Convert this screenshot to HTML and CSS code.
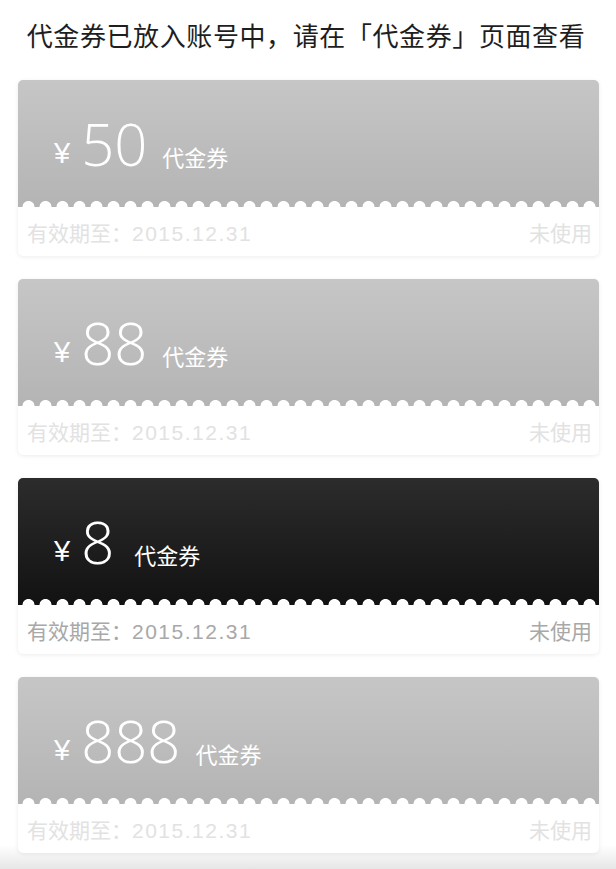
FILE: index.html
```html
<!DOCTYPE html>
<html lang="zh-CN">
<head>
<meta charset="utf-8">
<link rel="stylesheet" href="styles.css">
</head>
<body>
<div class="page">
  <h1 class="notice">代金券已放入账号中，请在「代金券」页面查看</h1>
  <div class="list">
    <div class="coupon">
      <div class="coupon-head">
        <span class="yen">¥</span><span class="amount">50</span><span class="label">代金券</span>
      </div>
      <div class="coupon-foot"><span>有效期至：<span class="date">2015.12.31</span></span><span>未使用</span></div>
    </div>
    <div class="coupon">
      <div class="coupon-head">
        <span class="yen">¥</span><span class="amount">88</span><span class="label">代金券</span>
      </div>
      <div class="coupon-foot"><span>有效期至：<span class="date">2015.12.31</span></span><span>未使用</span></div>
    </div>
    <div class="coupon active">
      <div class="coupon-head">
        <span class="yen">¥</span><span class="amount">8</span><span class="label">代金券</span>
      </div>
      <div class="coupon-foot"><span>有效期至：<span class="date">2015.12.31</span></span><span>未使用</span></div>
    </div>
    <div class="coupon">
      <div class="coupon-head">
        <span class="yen">¥</span><span class="amount">888</span><span class="label">代金券</span>
      </div>
      <div class="coupon-foot"><span>有效期至：<span class="date">2015.12.31</span></span><span>未使用</span></div>
    </div>
  </div>
</div>
</body>
</html>
```

FILE: styles.css
```css
html, body {
  margin: 0;
  padding: 0;
  background: #fff;
}
body {
  font-family: "Noto Sans CJK SC", "Noto Sans", sans-serif;
  width: 616px;
  height: 869px;
  overflow: hidden;
}
.page {
  height: 869px;
  background: linear-gradient(to bottom, #fff 0, #fff 845px, #e6e6e6 869px);
}
.notice {
  margin: 0;
  height: 80px;
  display: flex;
  align-items: center;
  justify-content: center;
  padding: 0 4px 12px 0;
  box-sizing: border-box;
  font-size: 26px;
  font-weight: 400;
  color: #1e1e1e;
  letter-spacing: 0.6px;
}
.list {
  display: flex;
  flex-direction: column;
  gap: 23px;
  padding: 0 17px 0 18px;
}
.coupon {
  height: 176px;
  border-radius: 5px;
  background: #fff;
  box-shadow: 0 1px 4px rgba(0, 0, 0, 0.08);
  display: flex;
  flex-direction: column;
  overflow: hidden;
}
.coupon-head {
  position: relative;
  height: 127px;
  background: linear-gradient(to bottom, #c6c6c6, #b4b4b4);
  padding: 32px 0 0 36px;
  box-sizing: border-box;
  color: #fff;
  white-space: nowrap;
  line-height: 64px;
}
.coupon-head::after {
  content: "";
  position: absolute;
  left: 2px;
  right: 0;
  bottom: 0;
  height: 6px;
  background: radial-gradient(circle at 50% 100%, #fff 5.6px, rgba(255,255,255,0) 6.4px) 0 0 / 17px 6px repeat-x;
}
.active .coupon-head {
  background: linear-gradient(to bottom, #2c2c2c, #121212);
}
.yen {
  font-family: "Liberation Sans", sans-serif;
  font-size: 29px;
  margin-right: 11px;
  vertical-align: 3px;
}
.amount {
  font-family: "Open Sans", Roboto, sans-serif;
  font-weight: 300;
  font-size: 58px;
}
.label {
  font-size: 22px;
  margin-left: 15px;
}
.active .label {
  margin-left: 20px;
}
.coupon-foot {
  flex: 1;
  display: flex;
  justify-content: space-between;
  align-items: center;
  padding: 0 7px 0 9px;
  font-size: 21px;
  color: #e2e2e2;
}
.date {
  font-family: "Liberation Sans", sans-serif;
  letter-spacing: 1.5px;
}
.active .coupon-foot {
  color: #a8a8a8;
}
```
